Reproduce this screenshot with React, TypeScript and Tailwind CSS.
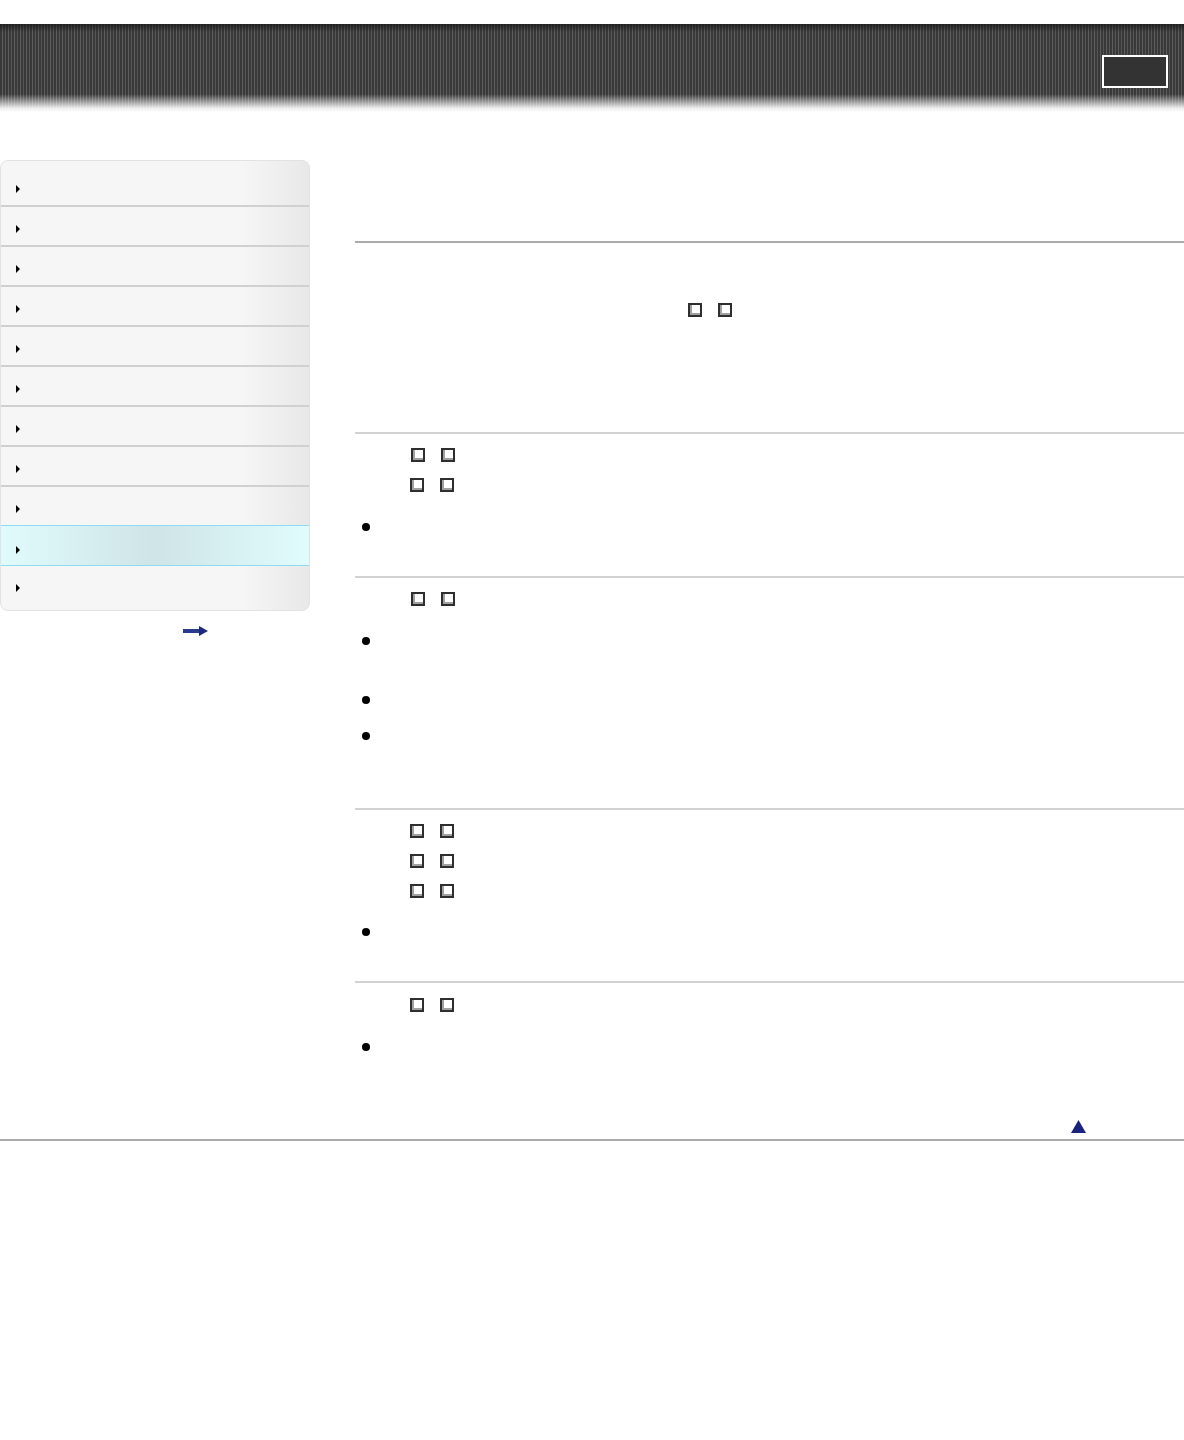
import React from 'react';

const navItems = Array.from({ length: 11 }, (_, i) => i);
const ACTIVE = 9;

function Caret() {
  return (
    <span className="block w-0 h-0 border-y-[4px] border-y-transparent border-l-[4px] border-l-black" />
  );
}

function Glyph() {
  return (
    <span className="inline-block w-[14px] h-[14px] border-2 border-[#2e2e2e] bg-white shadow-[inset_2px_-2px_0_#a0a0a0]" />
  );
}

function GlyphRow({ indent = 56 }: { indent?: number }) {
  return (
    <div className="h-[30px] flex items-center gap-4" style={{ paddingLeft: indent }}>
      <Glyph />
      <Glyph />
    </div>
  );
}

function Bullet({ className = '' }: { className?: string }) {
  return (
    <div className={`h-[30px] flex items-center pl-[7px] ${className}`}>
      <span className="w-2 h-2 rounded-full bg-black" />
    </div>
  );
}

function Rule() {
  return <div className="h-[2px] bg-[#d2d2d2]" />;
}

export default function App() {
  return (
    <div className="min-h-[1440px] bg-white font-['Liberation_Sans',Arial,sans-serif]">
      {/* header band */}
      <div className="pt-6">
        <div className="h-[88px] flex justify-end pr-4 pt-[31px] bg-[linear-gradient(to_bottom,rgba(20,20,20,0.7)_0px,rgba(20,20,20,0)_8px,rgba(255,255,255,0)_70px,rgba(255,255,255,0.9)_84px,#ffffff_88px),repeating-linear-gradient(90deg,#383838_0px,#383838_2px,#5e5e5e_2px,#5e5e5e_3px,#3a3a3a_3px,#3a3a3a_5px,#565656_5px,#565656_6px)]">
          <div className="w-[66px] h-[33px] border-2 border-white bg-[#333]" />
        </div>
      </div>

      <div className="flex mt-12">
        {/* sidebar */}
        <aside className="w-[310px] shrink-0">
          <div className="rounded-lg border border-[#e2e2e2] pt-[6px] pb-[6px] bg-[linear-gradient(to_right,#f6f6f6_78%,#e8e8e8)] overflow-hidden">
            {navItems.map((i) => {
              const active = i === ACTIVE;
              const last = i === navItems.length - 1;
              const beforeActive = i === ACTIVE - 1;
              if (active) {
                return (
                  <div
                    key={i}
                    className="h-[41px] border-y border-[#8fdcf2] pl-[15px] pt-[20px] bg-gradient-to-r from-[#e0fbfd] via-[#cfe4e7] to-[#e0fcfd]"
                  >
                    <Caret />
                  </div>
                );
              }
              return (
                <div
                  key={i}
                  className={`pl-[15px] pt-[18px] ${
                    last || beforeActive ? 'h-[38px]' : 'h-[40px] border-b-2 border-[#d0d0d0]'
                  }`}
                >
                  <Caret />
                </div>
              );
            })}
          </div>
          <div className="pl-[183px] pt-[15px]">
            <svg width="25" height="10" viewBox="0 0 25 10" className="block">
              <rect x="0" y="3" width="18" height="4" fill="#2a3a8c" />
              <path d="M16 0 L25 5 L16 10 Z" fill="#1c2a80" />
            </svg>
          </div>
        </aside>

        {/* main content */}
        <main className="flex-1 ml-[45px]">
          <div className="h-[81px]" />
          <div className="h-[2px] bg-[#aaaaaa]" />
          <div className="mt-[57px] h-[20px] flex items-center gap-4 pl-[333px]">
            <Glyph />
            <Glyph />
          </div>
          <div className="mt-[112px]" />
          <Rule />

          <section>
            <div className="mt-[6px]" />
            <GlyphRow />
            <GlyphRow indent={55} />
            <Bullet className="mt-[12px]" />
            <div className="h-[34px]" />
          </section>
          <Rule />

          <section>
            <div className="mt-[6px]" />
            <GlyphRow />
            <Bullet className="mt-[12px]" />
            <Bullet className="mt-[29px]" />
            <Bullet className="mt-[6px]" />
            <div className="h-[57px]" />
          </section>
          <Rule />

          <section>
            <div className="mt-[6px]" />
            <GlyphRow indent={55} />
            <GlyphRow indent={55} />
            <GlyphRow indent={55} />
            <Bullet className="mt-[11px]" />
            <div className="h-[34px]" />
          </section>
          <Rule />

          <section>
            <div className="mt-[7px]" />
            <GlyphRow indent={55} />
            <Bullet className="mt-[12px]" />
          </section>

          <div className="mt-[58px] h-[13px] flex pl-[716px]">
            <svg width="15" height="13" viewBox="0 0 15 13">
              <path d="M7.5 0 L15 13 L0 13 Z" fill="#1a237e" />
            </svg>
          </div>
        </main>
      </div>

      <div className="mt-[6px] h-[2px] bg-[#aaaaaa]" />
    </div>
  );
}
